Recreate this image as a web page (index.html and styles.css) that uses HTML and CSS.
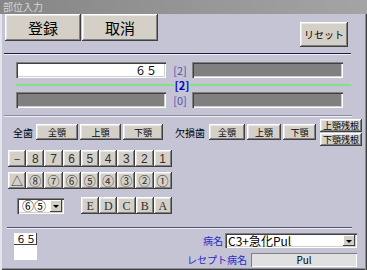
FILE: index.html
```html
<!DOCTYPE html>
<html lang="ja">
<head>
  <meta charset="UTF-8">
  <meta name="viewport" content="width=device-width, initial-scale=1.0">
  <title>部位入力</title>
  <link rel="stylesheet" href="styles.css">
</head>
<body>
  <div class="titlebar">部位入力</div>

  <div class="panel">
    <div class="actions">
      <button class="btn btn-lg">登録</button>
      <button class="btn btn-lg">取消</button>
      <button class="btn btn-reset">リセット</button>
    </div>
    <div class="rule rule-dark"></div>

    <div class="chart">
      <div class="chart-row">
        <div class="field field-white">６５</div>
        <span class="idx">[2]</span>
        <div class="field field-gray"></div>
      </div>
      <div class="chart-mid">
        <div class="gline"></div>
        <span class="idx idx-cur">[2]</span>
        <div class="gline gline-r"></div>
      </div>
      <div class="chart-row">
        <div class="field field-gray field-left"></div>
        <span class="idx">[0]</span>
        <div class="field field-gray"></div>
      </div>
    </div>
    <div class="rule rule-light"></div>

    <div class="jaw-row">
      <span class="jaw-label">全歯</span>
      <button class="btn btn-sm w42">全顎</button>
      <button class="btn btn-sm w41">上顎</button>
      <button class="btn btn-sm w40">下顎</button>
      <span class="jaw-label jaw-label-2">欠損歯</span>
      <button class="btn btn-sm w36">全顎</button>
      <button class="btn btn-sm w34">上顎</button>
      <button class="btn btn-sm w33">下顎</button>
      <div class="root-stack">
        <button class="btn btn-root">上顎残根</button>
        <button class="btn btn-root">下顎残根</button>
      </div>
    </div>

    <div class="keys keys-digits">
      <button class="btn key">－</button>
      <button class="btn key">8</button>
      <button class="btn key">7</button>
      <button class="btn key">6</button>
      <button class="btn key">5</button>
      <button class="btn key">4</button>
      <button class="btn key">3</button>
      <button class="btn key">2</button>
      <button class="btn key">1</button>
    </div>
    <div class="keys keys-circled">
      <button class="btn key">△</button>
      <button class="btn key">⑧</button>
      <button class="btn key">⑦</button>
      <button class="btn key">⑥</button>
      <button class="btn key">⑤</button>
      <button class="btn key">④</button>
      <button class="btn key">③</button>
      <button class="btn key">②</button>
      <button class="btn key">①</button>
    </div>
    <div class="key-bottom">
      <div class="combo combo-small">
        <span class="combo-text">⑥⑤</span>
        <span class="combo-arrow"></span>
      </div>
      <div class="keys keys-letters">
        <button class="btn key key-serif">E</button>
        <button class="btn key key-serif">D</button>
        <button class="btn key key-serif">C</button>
        <button class="btn key key-serif">B</button>
        <button class="btn key key-serif">A</button>
      </div>
    </div>
    <div class="rule rule-bottom"></div>

    <div class="footer">
      <div class="num-box">
        <div class="num-head">６５</div>
      </div>
      <div class="disease">
        <div class="disease-row">
          <span class="blue-label">病名</span>
          <div class="combo combo-wide">
            <span class="combo-text">C3+急化Pul</span>
            <span class="combo-arrow"></span>
          </div>
        </div>
        <div class="disease-row disease-row-2">
          <span class="blue-label">レセプト病名</span>
          <div class="receipt">Pul</div>
        </div>
      </div>
    </div>
  </div>
</body>
</html>
```

FILE: styles.css
```css
* {
  box-sizing: border-box;
}
body {
  margin: 0;
  width: 367px;
  height: 270px;
  overflow: hidden;
  background: #c4c4d4;
  font-family: "Noto Sans CJK JP", "Liberation Sans", sans-serif;
}
.titlebar {
  height: 14px;
  padding-left: 3px;
  background: linear-gradient(to right, #868686, #a4a4a4);
  color: #d6d6d6;
  font-size: 10px;
  line-height: 14px;
}
.panel {
  height: 256px;
  background: #c4c4d4;
  box-shadow: inset 2px 0 #e4e4ec, inset -1px 0 #404040, inset -2px 0 #8c8c98,
    inset 0 -1px #404040, inset 0 -2px #8c8c98;
}

/* buttons */
.btn {
  padding: 0;
  border: none;
  background: #d4d0c8;
  color: #000;
  font-family: "Noto Sans CJK JP", "Liberation Sans", sans-serif;
  box-shadow: inset -1px -1px #404040, inset 1px 1px #ffffff,
    inset -2px -2px #808080, inset 2px 2px #e8e8e8;
  line-height: 1;
}
.actions {
  display: flex;
  height: 39px;
  padding-left: 5px;
}
.btn-lg {
  width: 76px;
  height: 27px;
  font-size: 15px;
}
.btn-lg + .btn-lg {
  margin-left: 1px;
}
.btn-reset {
  width: 48px;
  height: 25px;
  margin: 8px 19px 0 auto;
  font-size: 10px;
}

.rule {
  height: 2px;
}
.rule-dark {
  width: 347px;
  margin-left: 4px;
  border-top: 1px solid #1c1c40;
  border-bottom: 1px solid #eeeef4;
}
.rule-light {
  width: 348px;
  margin: 7px 0 0 4px;
  border-top: 1px solid #8a8aa0;
  border-bottom: 1px solid #eeeef4;
}
.rule-bottom {
  width: 345px;
  margin: 13px 0 0 7px;
  border-top: 1px solid #50506a;
  border-bottom: 1px solid #eeeef4;
}

/* tooth chart */
.chart {
  padding: 7px 0 0 16px;
}
.chart-row {
  display: flex;
  height: 16px;
}
.field {
  height: 16px;
  box-shadow: inset 1px 1px #808080, inset 2px 2px #404040,
    inset -1px -1px #ffffff, inset -2px -2px #d4d0c8;
}
.field-white {
  width: 150px;
  padding-right: 9px;
  background: #fff;
  text-align: right;
  font-size: 11px;
  line-height: 16px;
}
.field-gray {
  width: 151px;
  background: #808080;
}
.field-left {
  width: 150px;
}
.idx {
  width: 26px;
  padding-left: 2px;
  text-align: center;
  color: #5050b0;
  font-size: 11px;
  line-height: 16px;
}
.chart-mid {
  display: flex;
  align-items: center;
  height: 14px;
}
.gline {
  width: 158px;
  height: 2px;
  background: #84e084;
}
.gline-r {
  width: 161px;
}
.idx-cur {
  width: 16px;
  padding: 0;
  color: #0000c8;
  font-weight: bold;
  line-height: 12px;
}

/* jaw buttons */
.jaw-row {
  display: flex;
  align-items: center;
  height: 30px;
  padding-left: 13px;
}
.jaw-label {
  width: 23px;
  font-size: 10px;
}
.jaw-label-2 {
  width: 34px;
  margin-left: 10px;
}
.btn-sm {
  height: 16px;
  margin-right: 2px;
  font-size: 9px;
}
.w42 { width: 42px; }
.w41 { width: 41px; }
.w40 { width: 40px; }
.w36 { width: 36px; }
.w34 { width: 34px; }
.w33 { width: 33px; }
.root-stack {
  display: flex;
  flex-direction: column;
  gap: 1px;
  margin-left: 2px;
}
.btn-root {
  width: 42px;
  height: 13px;
  font-size: 9px;
}

/* key pads */
.keys {
  display: grid;
  grid-template-columns: repeat(9, 18.2px);
  height: 17px;
}
.keys-digits {
  margin: 3px 0 0 8px;
}
.keys-circled {
  margin: 5px 0 0 8px;
}
.key {
  height: 17px;
  font-size: 12px;
  color: #303030;
}
.keys-digits .key {
  font-family: "Liberation Sans", sans-serif;
  font-size: 12px;
}
.key-bottom {
  display: flex;
  align-items: center;
  height: 17px;
  margin-top: 8px;
  padding-left: 17px;
}
.keys-letters {
  grid-template-columns: repeat(5, 18.2px);
  margin-left: 17px;
}
.key-serif {
  font-family: "Liberation Serif", serif;
  font-size: 12px;
  font-weight: normal;
}

/* combos */
.combo {
  display: flex;
  align-items: center;
  background: #fff;
  box-shadow: inset 1px 1px #808080, inset 2px 2px #404040,
    inset -1px -1px #ffffff, inset -2px -2px #d4d0c8;
}
.combo-small {
  width: 47px;
  height: 16px;
  padding: 2px;
}
.combo-text {
  flex: 1;
  padding-left: 3px;
  font-size: 12px;
  line-height: 12px;
}
.combo-arrow {
  position: relative;
  width: 12px;
  height: 12px;
  background: #d4d0c8;
  box-shadow: inset -1px -1px #404040, inset 1px 1px #ffffff;
}
.combo-arrow::after {
  content: "";
  position: absolute;
  left: 3px;
  top: 5px;
  border-left: 3px solid transparent;
  border-right: 3px solid transparent;
  border-top: 3px solid #000;
}
.combo-wide {
  width: 132px;
  height: 15px;
  padding: 2px;
}
.combo-wide .combo-text {
  padding-left: 1px;
  font-size: 12px;
  line-height: 11px;
}
.combo-wide .combo-arrow {
  height: 11px;
}

/* footer */
.footer {
  display: flex;
}
.num-box {
  width: 23px;
  height: 27px;
  margin: 4px 0 0 14px;
  background: #fff;
}
.num-head {
  height: 12px;
  border-bottom: 1px solid #404040;
  border-right: 1px solid #404040;
  font-size: 10px;
  line-height: 11px;
  padding-left: 2px;
}
.disease {
  margin-left: auto;
  margin-right: 10px;
}
.disease-row {
  display: flex;
  justify-content: flex-end;
  align-items: center;
  gap: 2px;
  margin-top: 4px;
}
.disease-row-2 {
  gap: 4px;
}
.blue-label {
  color: #2828c8;
  font-size: 10px;
}
.receipt {
  width: 106px;
  height: 14px;
  background: #e0e0e0;
  text-align: center;
  font-size: 10px;
  line-height: 14px;
  box-shadow: inset 1px 1px #808080, inset -1px -1px #ffffff;
}
```
